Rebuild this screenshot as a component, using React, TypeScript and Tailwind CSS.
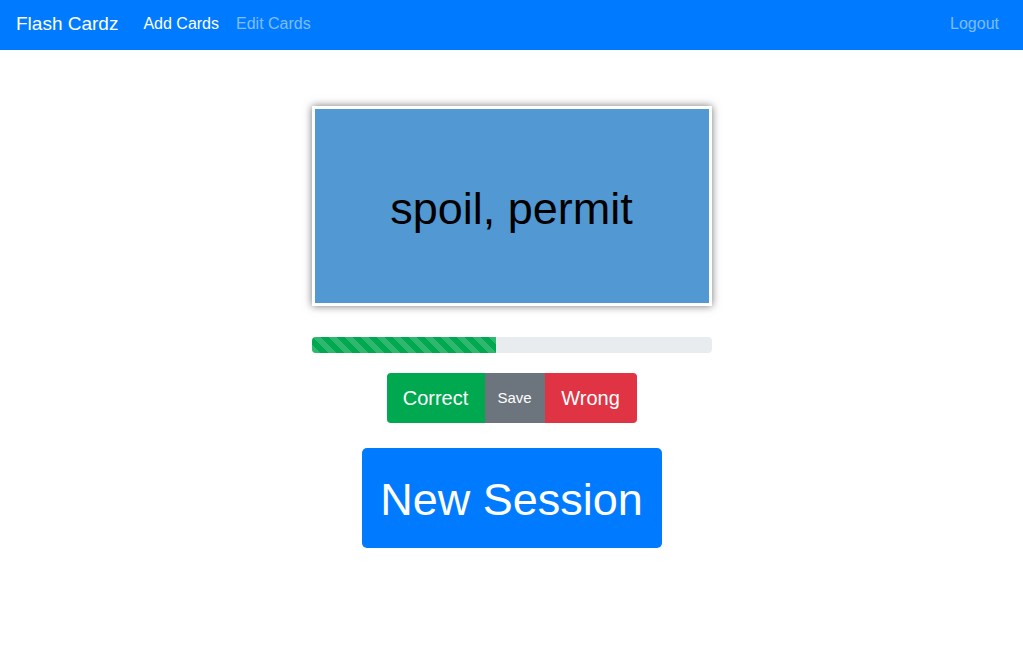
const progress = 46;

export default function App() {
  return (
    <div className="min-h-[665px] bg-white font-['Liberation_Sans',Arial,sans-serif]">
      <nav className="flex h-[50px] items-center bg-[#007bff] pl-4 pr-6 pb-[3px]">
        <span className="mr-[25px] text-[19px] leading-none text-white">Flash Cardz</span>
        <a className="mr-[17px] text-[16px] text-white">Add Cards</a>
        <a className="text-[16px] text-white/50">Edit Cards</a>
        <a className="ml-auto text-[16px] text-white/50">Logout</a>
      </nav>

      <main className="flex flex-col items-center">
        <div className="mt-[56px] flex h-[200px] w-[400px] items-center justify-center border-[3px] border-white bg-[#5299d3] shadow-[0_0_8px_rgba(0,0,0,0.55)]">
          <span className="mt-[4px] text-[45px] leading-none text-black">spoil, permit</span>
        </div>

        <div className="mt-[31px] flex h-4 w-[400px] overflow-hidden rounded-[4px] bg-[#e9ecef]">
          <div
            className="h-full bg-[#00a84f] bg-[linear-gradient(45deg,rgba(255,255,255,.18)_25%,transparent_25%,transparent_50%,rgba(255,255,255,.18)_50%,rgba(255,255,255,.18)_75%,transparent_75%,transparent)] bg-[length:16px_16px]"
            style={{ width: `${progress}%` }}
          />
        </div>

        <div className="mt-5 flex h-[50px] overflow-hidden rounded-[4px]">
          <button className="w-[98px] bg-[#00a84f] text-[20px] text-white">Correct</button>
          <button className="w-[60px] bg-[#6c757d] text-[15px] text-white">Save</button>
          <button className="w-[92px] bg-[#e03444] text-[20px] text-white">Wrong</button>
        </div>

        <button className="mt-[25px] h-[100px] w-[300px] rounded-[5px] bg-[#007bff] pt-[3px] text-[45px] text-white">
          New Session
        </button>
      </main>
    </div>
  );
}
